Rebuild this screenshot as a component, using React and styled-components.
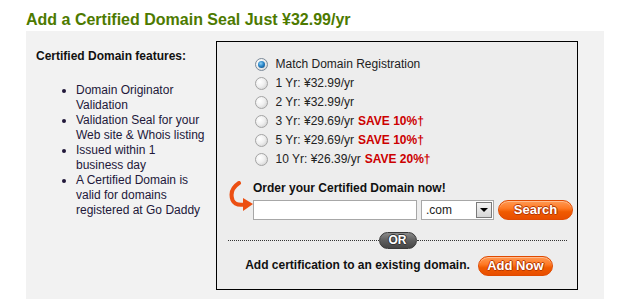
import React from "react"
import styled, { createGlobalStyle } from "styled-components"

const GlobalStyle = createGlobalStyle`
  html, body {
    margin: 0;
    padding: 0;
    background: #fff;
    font-family: "Liberation Sans", Arial, sans-serif;
  }
`

const Page = styled.div`
  width: 578px;
  padding-left: 26px;
  padding-top: 10px;
`

const Title = styled.h2`
  margin: 0 0 1px;
  font-size: 16px;
  line-height: 20px;
  font-weight: bold;
  color: #4d7a00;
`

const Panel = styled.div`
  display: flex;
  background: #f2f2f2;
  padding: 10px 26px 20px 0;
  font-size: 12px;
  line-height: 15px;
  color: #222;
`

const Features = styled.div`
  width: 180px;
  padding: 8px 0 0 10px;
`

const FeaturesTitle = styled.div`
  font-weight: bold;
  color: #111;
`

const FeatureList = styled.ul`
  margin: 19px 0 0;
  padding-left: 40px;
  width: 129.5px;
  color: #22183a;
`

const Feature = styled.li`
  margin: 0;
`

const OrderBox = styled.div`
  box-sizing: border-box;
  width: 362px;
  height: 249px;
  border: 1px solid #000;
  background: #ededed;
  padding-top: 13px;
`

const Options = styled.div`
  padding-left: 38px;
`

const OptionRow = styled.label`
  display: flex;
  align-items: center;
  height: 19px;
  line-height: 19px;
  white-space: nowrap;
`

const Radio = styled.span`
  box-sizing: border-box;
  width: 13px;
  height: 13px;
  margin-right: 7.5px;
  border-radius: 50%;
  border: 1px solid ${(p) => (p.$checked ? "#7b8a99" : "#a4a4a4")};
  background: radial-gradient(circle at 35% 35%, #ffffff 0%, #f0f0f0 45%, #c9c9c9 100%);
  display: flex;
  align-items: center;
  justify-content: center;
  &::after {
    content: "";
    display: ${(p) => (p.$checked ? "block" : "none")};
    width: 7px;
    height: 7px;
    border-radius: 50%;
    background: radial-gradient(circle at 40% 35%, #8fd0f5 0%, #2a86c8 45%, #0b3f73 100%);
  }
`

const Save = styled.strong`
  color: #cc0000;
  margin-left: 4px;
`

const OrderArea = styled.div`
  display: flex;
  margin-top: 12px;
  padding-left: 11px;
`

const Arrow = styled.svg`
  width: 25px;
  height: 34px;
  margin-top: 0;
  flex-shrink: 0;
`

const OrderColumn = styled.div`
  display: flex;
  flex-direction: column;
`

const OrderLabel = styled.div`
  font-weight: bold;
  color: #111;
  margin-bottom: 3.5px;
`

const InputRow = styled.div`
  display: flex;
  gap: 4px;
`

const DomainInput = styled.div`
  box-sizing: border-box;
  width: 164px;
  height: 20px;
  background: #fff;
  border: 1px solid #a7a7a7;
`

const Select = styled.div`
  box-sizing: border-box;
  width: 73px;
  height: 20px;
  background: #fff;
  border: 1px solid #a7a7a7;
  display: flex;
  align-items: center;
  justify-content: space-between;
  padding: 0 1px 0 4px;
  line-height: 18px;
`

const DropButton = styled.span`
  box-sizing: border-box;
  width: 16px;
  height: 16px;
  border: 1px solid #7a7a7a;
  background: linear-gradient(#f4f4f4, #d6d6d6);
  display: flex;
  align-items: center;
  justify-content: center;
  &::after {
    content: "";
    border-left: 4px solid transparent;
    border-right: 4px solid transparent;
    border-top: 4px solid #000;
    margin-top: 1px;
  }
`

const PillButton = styled.button`
  box-sizing: border-box;
  width: 75px;
  height: 20px;
  padding: 0;
  border-radius: 10px;
  border: 1px solid #e04a00;
  background: linear-gradient(#ff9a55 0%, #ff7a25 40%, #f05a00 60%, #e84e00 100%);
  color: #fff;
  font-family: "Liberation Sans", Arial, sans-serif;
  font-weight: bold;
  font-size: 13px;
  line-height: 18px;
  text-shadow: 1px 0 0 #b83800, -1px 0 0 #b83800, 0 1px 0 #b83800, 0 -1px 0 #b83800;
  box-shadow: inset 0 1px 0 rgba(255, 255, 255, 0.35);
  cursor: pointer;
`

const Divider = styled.div`
  display: flex;
  align-items: center;
  margin: 12px 10px 0 11px;
`

const DottedLine = styled.div`
  flex: 1;
  border-top: 1px dotted #333;
`

const OrBadge = styled.span`
  box-sizing: border-box;
  width: 38px;
  height: 17px;
  border-radius: 9px;
  background: linear-gradient(#8a8a8a 0%, #5e5e5e 50%, #454545 100%);
  border: 1px solid #3a3a3a;
  color: #fff;
  font-weight: bold;
  font-size: 12px;
  line-height: 15px;
  text-align: center;
  text-shadow: 1px 0 0 #333, -1px 0 0 #333, 0 1px 0 #333, 0 -1px 0 #333;
`

const ExistingRow = styled.div`
  display: flex;
  align-items: center;
  justify-content: center;
  gap: 8px;
  margin-top: 7px;
  padding-left: 4px;
`

const ExistingText = styled.span`
  font-weight: bold;
  color: #111;
`

const options = [
  { years: null, label: "Match Domain Registration", checked: true },
  { years: 1, price: "32.99" },
  { years: 2, price: "32.99" },
  { years: 3, price: "29.69", save: "10%" },
  { years: 5, price: "29.69", save: "10%" },
  { years: 10, price: "26.39", save: "20%" },
]

const App = () => {
  return (
    <Page>
      <GlobalStyle />
      <Title>Add a Certified Domain Seal Just ¥32.99/yr</Title>
      <Panel>
        <Features>
          <FeaturesTitle>Certified Domain features:</FeaturesTitle>
          <FeatureList>
            <Feature>Domain Originator Validation</Feature>
            <Feature>Validation Seal for your Web site &amp; Whois listing</Feature>
            <Feature>Issued within 1 business day</Feature>
            <Feature>A Certified Domain is valid for domains registered at Go Daddy</Feature>
          </FeatureList>
        </Features>
        <OrderBox>
          <Options>
            {options.map((o, i) => (
              <OptionRow key={i}>
                <Radio $checked={o.checked} />
                {o.label ? (
                  o.label
                ) : (
                  <span>
                    {o.years} Yr: ¥{o.price}/yr
                    {o.save && <Save>SAVE {o.save}†</Save>}
                  </span>
                )}
              </OptionRow>
            ))}
          </Options>
          <OrderArea>
            <Arrow viewBox="0 0 25 34">
              <path
                d="M11 2 C5 6 2 12 4.5 19 C6.5 24 11 24.5 17 23.5"
                fill="none"
                stroke="#ec4f12"
                strokeWidth="4"
                strokeLinecap="round"
              />
              <polygon points="15,17 25,23 15,30" fill="#ec4f12" />
            </Arrow>
            <OrderColumn>
              <OrderLabel>Order your Certified Domain now!</OrderLabel>
              <InputRow>
                <DomainInput />
                <Select>
                  <span>.com</span>
                  <DropButton />
                </Select>
                <PillButton>Search</PillButton>
              </InputRow>
            </OrderColumn>
          </OrderArea>
          <Divider>
            <DottedLine />
            <OrBadge>OR</OrBadge>
            <DottedLine />
          </Divider>
          <ExistingRow>
            <ExistingText>Add certification to an existing domain.</ExistingText>
            <PillButton>Add Now</PillButton>
          </ExistingRow>
        </OrderBox>
      </Panel>
    </Page>
  )
}

export default App
